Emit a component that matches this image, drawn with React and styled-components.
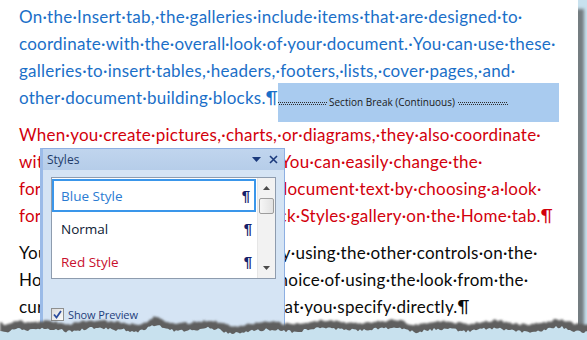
import styled, { createGlobalStyle } from 'styled-components';

const GlobalStyle = createGlobalStyle`
  html, body {
    margin: 0;
    padding: 0;
    width: 587px;
    height: 340px;
    overflow: hidden;
    background: #c8e1ee;
  }
`;

const Stage = styled.div`
  position: relative;
  width: 587px;
  height: 340px;
  overflow: hidden;
  background: #c8e1ee;
`;

const Page = styled.div`
  width: 578px;
  height: 340px;
  background: #ffffff;
  box-shadow: 6px 9px 3px rgba(70, 70, 70, 0.65);
  padding: 3px 19px 0 19px;
  box-sizing: border-box;
  font-family: Lato, "Open Sans", sans-serif;
  font-size: 17px;
  letter-spacing: 0.25px;
`;

const Paragraph = styled.div`
  color: ${(p) => p.$color};
  margin-bottom: 10px;
`;

const Line = styled.div`
  display: flex;
  align-items: center;
  height: 27px;
  line-height: 27px;
  white-space: pre;
`;

const SectionBreak = styled.div`
  margin-left: auto;
  align-self: flex-start;
  margin-top: -1px;
  width: 281px;
  height: 39px;
  flex-shrink: 0;
  background: #a9cbef;
  display: flex;
  align-items: center;
  padding-bottom: 2px;
  box-sizing: border-box;
  font-family: "Open Sans", "Noto Sans", sans-serif;
  font-size: 10px;
  letter-spacing: 0;
  line-height: 12px;
  color: #1a1a1a;
`;

const Dots = styled.div`
  width: ${(p) => p.$w}px;
  height: 3px;
  margin-top: 3px;
  background:
    repeating-linear-gradient(90deg, #2e2e2e 0 1px, transparent 1px 2px) top / 100% 1px no-repeat,
    repeating-linear-gradient(90deg, transparent 0 1px, #2e2e2e 1px 2px) bottom / 100% 1px no-repeat;
`;

const BreakLabel = styled.span`
  padding: 0 3px 0 2px;
`;

/* floating Styles pane */
const Pane = styled.div`
  position: absolute;
  left: 40px;
  top: 148px;
  width: 245px;
  height: 200px;
  box-sizing: border-box;
  border: 1px solid #8dafe2;
  border-left: 3px solid #9bbbe8;
  background: #d5e4f4;
  font-family: "Open Sans", "Noto Sans", sans-serif;
`;

const TitleBar = styled.div`
  display: flex;
  align-items: center;
  height: 21px;
  padding: 0 6px 0 4px;
  background: linear-gradient(#c0d5ee, #b6cde9);
  color: #1f3b69;
  font-size: 12px;
`;

const Title = styled.span`
  flex: 1;
`;

const TitleButton = styled.span`
  display: flex;
  align-items: center;
  justify-content: center;
  width: ${(p) => p.$w}px;
  margin-left: ${(p) => p.$gap}px;
`;

const PaneBody = styled.div`
  padding: 7px 8px 0 8px;
`;

const ListBox = styled.div`
  display: flex;
  height: 102px;
  box-sizing: border-box;
  border: 1px solid #8e9cae;
  background: #ffffff;
`;

const Items = styled.div`
  flex: 1;
  padding-top: 1px;
  display: flex;
  flex-direction: column;
`;

const Item = styled.div`
  display: flex;
  align-items: center;
  justify-content: space-between;
  height: 33px;
  box-sizing: border-box;
  padding: 0 4px 0 ${(p) => (p.$selected ? 7 : 9)}px;
  margin-right: 1px;
  border: ${(p) => (p.$selected ? '2px solid #3a96ea' : 'none')};
  color: ${(p) => p.$color};
  font-size: 13.5px;
`;

const Pilcrow = styled.span`
  color: #14216b;
  font-family: "Liberation Sans", Arial, sans-serif;
  font-weight: bold;
  font-size: 15px;
`;

const ScrollBar = styled.div`
  width: 17px;
  display: flex;
  flex-direction: column;
  align-items: center;
  background: #f2f2f2;
  border-left: 1px solid #e6e6e6;
`;

const Arrow = styled.div`
  height: ${(p) => p.$h}px;
  display: flex;
  align-items: center;
  justify-content: center;
`;

const Thumb = styled.div`
  width: 15px;
  height: 16px;
  box-sizing: border-box;
  border: 1px solid #9d9d9d;
  border-radius: 2px;
  background: linear-gradient(90deg, #f6f6f6, #e2e2e2);
`;

const ScrollGap = styled.div`
  flex: 1;
`;

const Footer = styled.div`
  display: flex;
  align-items: center;
  margin-top: 28px;
  gap: 4px;
  color: #1d3d7b;
  font-size: 11px;
  letter-spacing: -0.1px;
`;

const CheckBox = styled.span`
  width: 13px;
  height: 13px;
  box-sizing: border-box;
  border: 1px solid #8e8f8f;
  background: linear-gradient(135deg, #dcdcdc, #fbfbfb);
  display: flex;
  align-items: center;
  justify-content: center;
`;

const TornEdge = styled.svg`
  position: absolute;
  left: 0;
  top: 300px;
  width: 587px;
  height: 40px;
`;

function mulberry(seed) {
  let a = seed;
  return () => {
    a |= 0;
    a = (a + 0x6d2b79f5) | 0;
    let t = Math.imul(a ^ (a >>> 15), 1 | a);
    t = (t + Math.imul(t ^ (t >>> 7), 61 | t)) ^ t;
    return ((t ^ (t >>> 14)) >>> 0) / 4294967296;
  };
}

const bumps = [
  [18, -4, 7], [70, 1, 10], [122, -2, 8], [156, -5, 9], [230, 3, 14],
  [300, -1, 10], [398, -4, 10], [470, 1, 12], [560, -3, 9], [585, 2, 5],
];

function edgePath(shift, seed, jitter) {
  const rnd = mulberry(seed);
  let d = '';
  for (let x = 0; x <= 590; x += 2) {
    let y = 323 + shift + 1.3 * Math.sin(x / 9) + 1.1 * Math.sin(x / 21 + 1);
    bumps.forEach(([c, h, w]) => {
      y += h * Math.exp(-(((x - c) / w) ** 2));
    });
    y += (rnd() - 0.5) * jitter;
    d += `${x === 0 ? 'M' : 'L'}${x},${y.toFixed(1)} `;
  }
  return d + 'L590,345 L0,345 Z';
}

const blueLines = [
  'On·the·Insert·tab,·the·galleries·include·items·that·are·designed·to·',
  'coordinate·with·the·overall·look·of·your·document.·You·can·use·these·',
  'galleries·to·insert·tables,·headers,·footers,·lists,·cover·pages,·and·',
];

const redLines = [
  'When·you·create·pictures,·charts,·or·diagrams,·they·also·coordinate·',
  'with·your·current·document·look.·You·can·easily·change·the·',
  'formatting·of·selected·text·in·the·document·text·by·choosing·a·look·',
  'for·the·selected·text·from·the·Quick·Styles·gallery·on·the·Home·tab.¶',
];

const blackLines = [
  'You·can·also·format·text·directly·by·using·the·other·controls·on·the·',
  'Home·tab.·Most·controls·offer·a·choice·of·using·the·look·from·the·',
  'current·theme·or·using·a·format·that·you·specify·directly.¶',
];

const styles = [
  { name: 'Blue Style', color: '#2a7bd2', selected: true },
  { name: 'Normal', color: '#0d1a33' },
  { name: 'Red Style', color: '#c8102e' },
];

export default function App() {
  return (
    <Stage>
      <GlobalStyle />
      <Page>
        <Paragraph $color="#1b6fc8">
          {blueLines.map((l) => (
            <Line key={l}>{l}</Line>
          ))}
          <Line>
            other·document·building·blocks.¶
            <SectionBreak>
              <Dots $w={49} />
              <BreakLabel>Section Break (Continuous)</BreakLabel>
              <Dots $w={50} />
            </SectionBreak>
          </Line>
        </Paragraph>
        <Paragraph $color="#d2000c">
          {redLines.map((l) => (
            <Line key={l}>{l}</Line>
          ))}
        </Paragraph>
        <Paragraph $color="#0a0a0a">
          {blackLines.map((l) => (
            <Line key={l}>{l}</Line>
          ))}
        </Paragraph>
      </Page>

      <Pane>
        <TitleBar>
          <Title>Styles</Title>
          <TitleButton $w={9} $gap={0}>
            <svg width="9" height="5" viewBox="0 0 9 5">
              <path d="M0 0 H9 L4.5 5 Z" fill="#1b3a7c" />
            </svg>
          </TitleButton>
          <TitleButton $w={9} $gap={8}>
            <svg width="9" height="9" viewBox="0 0 9 9">
              <path d="M1 1 L8 8 M8 1 L1 8" stroke="#1b3a7c" strokeWidth="1.6" />
            </svg>
          </TitleButton>
        </TitleBar>
        <PaneBody>
          <ListBox>
            <Items>
              {styles.map((s) => (
                <Item key={s.name} $color={s.color} $selected={s.selected}>
                  {s.name}
                  <Pilcrow>¶</Pilcrow>
                </Item>
              ))}
            </Items>
            <ScrollBar>
              <Arrow $h={20}>
                <svg width="7" height="4" viewBox="0 0 7 4">
                  <path d="M0 4 L3.5 0 L7 4 Z" fill="#4a4a4a" />
                </svg>
              </Arrow>
              <Thumb />
              <ScrollGap />
              <Arrow $h={20}>
                <svg width="7" height="4" viewBox="0 0 7 4">
                  <path d="M0 0 L3.5 4 L7 0 Z" fill="#4a4a4a" />
                </svg>
              </Arrow>
            </ScrollBar>
          </ListBox>
          <Footer>
            <CheckBox>
              <svg width="9" height="9" viewBox="0 0 9 9">
                <path d="M1 4.5 L3.5 7.5 L8 1" stroke="#2b4c9e" strokeWidth="1.8" fill="none" />
              </svg>
            </CheckBox>
            Show Preview
          </Footer>
        </PaneBody>
      </Pane>

      <TornEdge viewBox="0 300 587 40">
        <defs>
          <filter id="soft" x="-5%" y="-50%" width="110%" height="200%">
            <feGaussianBlur stdDeviation="1.3" />
          </filter>
          <filter id="softer" x="-5%" y="-50%" width="110%" height="200%">
            <feGaussianBlur stdDeviation="0.6" />
          </filter>
        </defs>
        <path d={edgePath(-0.5, 7, 2.6)} fill="#5f5f5f" filter="url(#soft)" />
        <path d={edgePath(7, 11, 3)} fill="#c8e1ee" filter="url(#softer)" />
      </TornEdge>
    </Stage>
  );
}
